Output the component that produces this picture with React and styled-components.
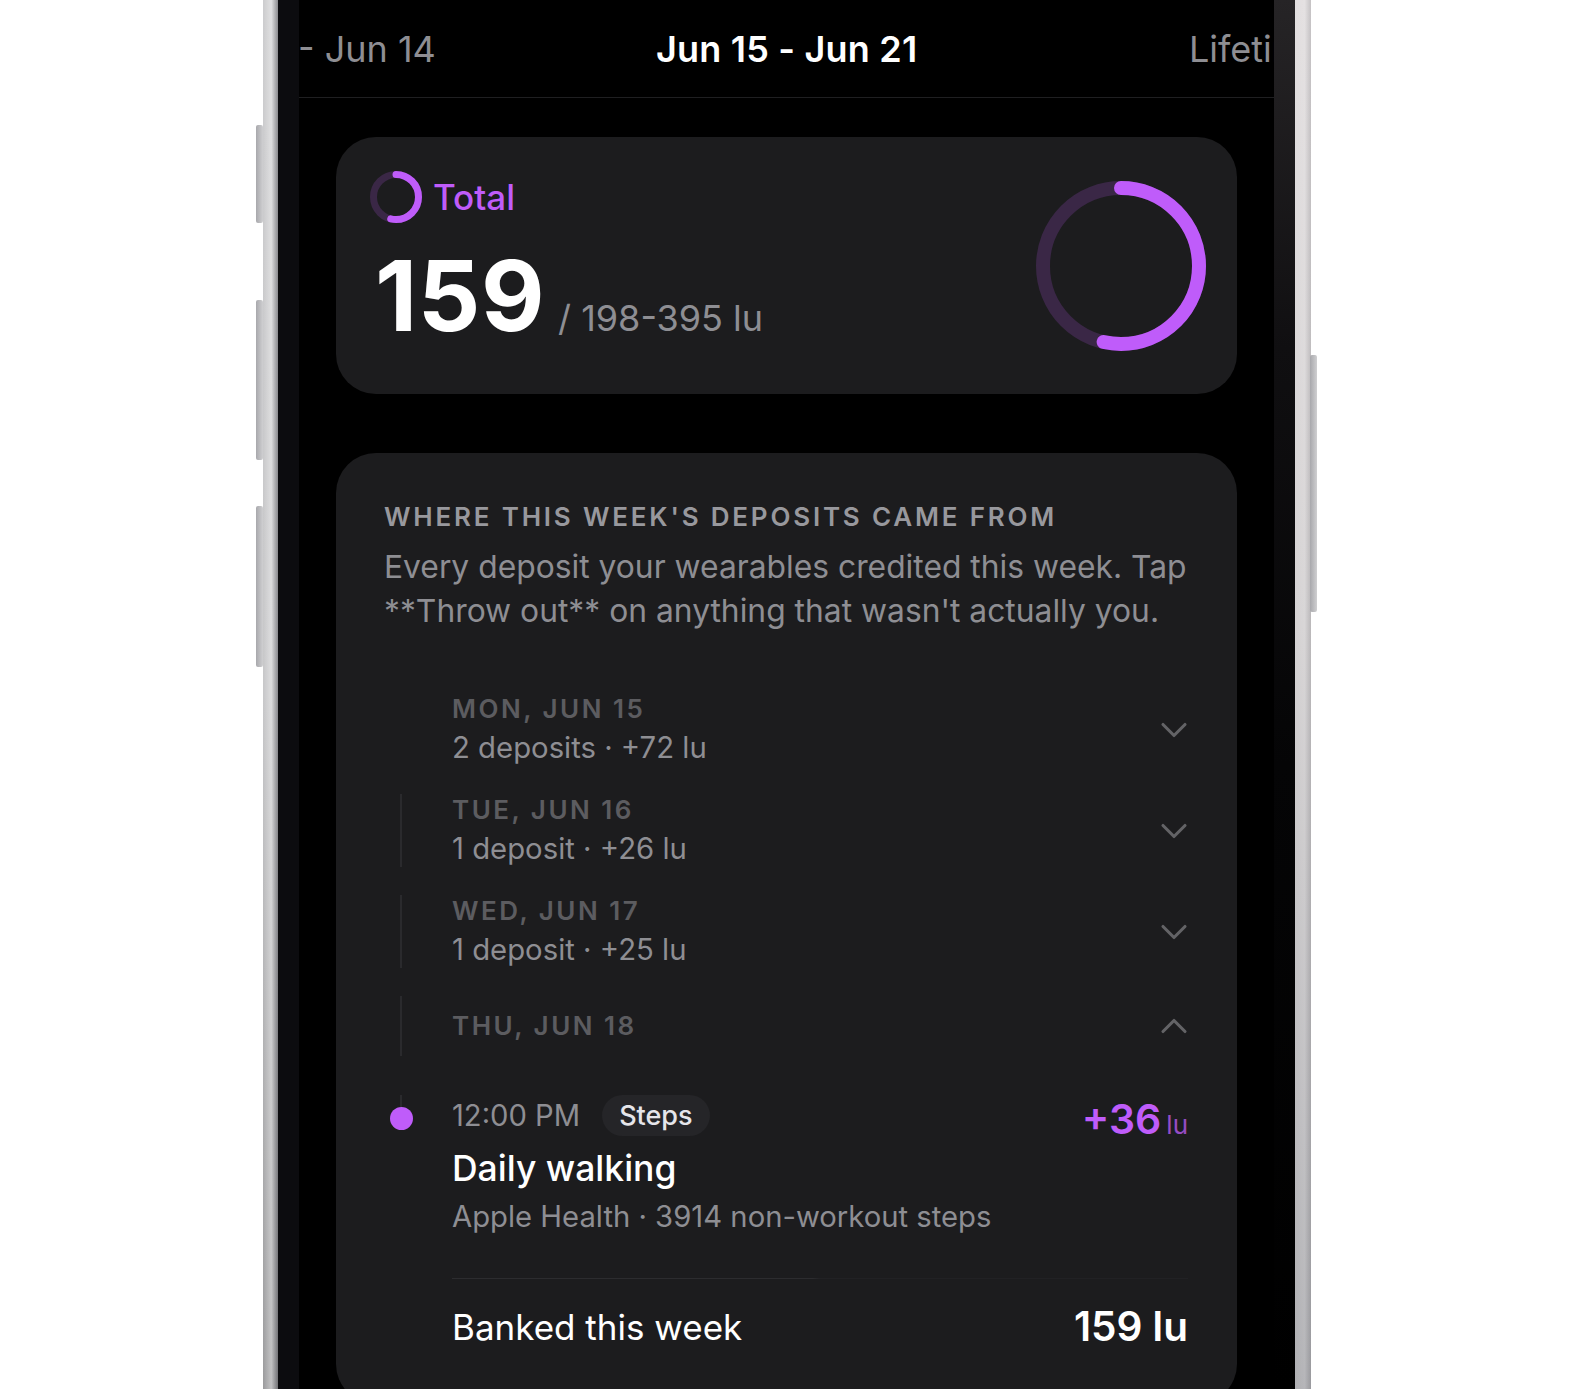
import styled, { createGlobalStyle } from "styled-components";
import { ChevronDown, ChevronUp } from "lucide-react";

const GlobalStyle = createGlobalStyle`
  html, body {
    margin: 0;
    padding: 0;
    background: #fff;
  }
  body {
    font-family: "Inter", "Liberation Sans", sans-serif;
  }
  #root {
    height: 1390px;
    overflow: hidden;
  }
`;

const PURPLE = "#bf5cfa";

const Page = styled.div`
  width: 1572px;
  height: 1389px;
  padding-left: 263px;
  box-sizing: border-box;
`;

const Phone = styled.div`
  position: relative;
  width: 1048px;
  height: 1389px;
  display: flex;
`;

const SideButton = styled.div`
  position: absolute;
  top: ${(p) => p.$top}px;
  height: ${(p) => p.$height}px;
  width: 7px;
  ${(p) => (p.$right ? "right: -6px;" : "left: -7px;")}
  background: linear-gradient(90deg, #a8a8ac, #cfcfd1);
  border-radius: 2px;
`;

const FrameLeft = styled.div`
  width: 15px;
  flex-shrink: 0;
  background:
    linear-gradient(90deg, rgba(255, 255, 255, 0.1), rgba(255, 255, 255, 0.45) 55%, rgba(90, 90, 95, 0.55)),
    linear-gradient(180deg, #c6c6c8 0%, #c0c0c2 50%, #8f8f91 100%);
`;

const FrameRight = styled.div`
  width: 16px;
  flex-shrink: 0;
  background:
    linear-gradient(90deg, rgba(255, 255, 255, 0.12), rgba(255, 255, 255, 0.2) 60%, rgba(120, 120, 125, 0.25)),
    linear-gradient(180deg, #dedadb 0%, #cfcccd 45%, #a4a4a8 100%);
`;

const BezelLeft = styled.div`
  width: 21px;
  flex-shrink: 0;
  background: #0c0c0f;
`;

const BezelRight = styled.div`
  width: 21px;
  flex-shrink: 0;
  background: linear-gradient(180deg, #262426 0%, #100f11 25%, #050506 55%, #000 100%);
`;

const Screen = styled.div`
  width: 975px;
  flex-shrink: 0;
  height: 1389px;
  overflow: hidden;
  background: #000;
`;

const Tabs = styled.div`
  display: grid;
  grid-template-columns: 358px 533px 200px;
  align-items: center;
  height: 97px;
  box-sizing: content-box;
  border-bottom: 1px solid #1f1f21;
  font-size: 36px;
  line-height: 99px;
  text-indent: -1px;
  white-space: nowrap;
  overflow: hidden;
`;

const Tab = styled.div`
  color: ${(p) => (p.$active ? "#fff" : "#8e8e93")};
  font-weight: ${(p) => (p.$active ? 600 : 400)};
  letter-spacing: ${(p) => (p.$active ? "0.2px" : "0")};
`;

const Content = styled.div`
  padding: 39px 37px 0;
  display: flex;
  flex-direction: column;
  gap: 59px;
`;

const Card = styled.div`
  background: #1c1c1e;
  border-radius: 40px;
`;

const TotalCard = styled(Card)`
  height: 257px;
  box-sizing: border-box;
  padding: 1px 31px 0 34px;
  display: flex;
  align-items: center;
  justify-content: space-between;
`;

const TotalText = styled.div`
  display: flex;
  flex-direction: column;
  padding-top: 13px;
`;

const TotalLabel = styled.div`
  display: flex;
  align-items: center;
  gap: 11px;
  color: ${PURPLE};
  font-size: 35px;
  font-weight: 500;
`;

const TotalValue = styled.div`
  display: flex;
  align-items: baseline;
  gap: 13px;
  margin-top: 17px;
  padding-left: 5px;
  line-height: 112px;
`;

const BigNumber = styled.span`
  color: #fff;
  font-size: 98px;
  font-weight: 700;
  letter-spacing: 0.5px;
`;

const Goal = styled.span`
  color: #8e8e93;
  font-size: 36px;
`;

const Ring = ({ size, stroke, value }) => {
  const r = (size - stroke) / 2;
  const c = 2 * Math.PI * r;
  return (
    <svg width={size} height={size} viewBox={`0 0 ${size} ${size}`} style={{ flexShrink: 0 }}>
      <circle cx={size / 2} cy={size / 2} r={r} fill="none" stroke="#3a2746" strokeWidth={stroke} />
      <circle
        cx={size / 2}
        cy={size / 2}
        r={r}
        fill="none"
        stroke={PURPLE}
        strokeWidth={stroke}
        strokeLinecap="round"
        strokeDasharray={`${c * value} ${c}`}
        transform={`rotate(-90 ${size / 2} ${size / 2})`}
      />
    </svg>
  );
};

const DepositsCard = styled(Card)`
  padding: 48px 49px 30px 48px;
`;

const Heading = styled.div`
  color: #98989d;
  font-size: 26px;
  line-height: 32px;
  font-weight: 600;
  letter-spacing: 2.8px;
`;

const Intro = styled.p`
  margin: 12px 0 0;
  color: #8e8e93;
  font-size: 31.8px;
  line-height: 44px;
`;

const Timeline = styled.div`
  margin-top: 60px;
`;

const Row = styled.div`
  display: flex;
  padding-bottom: ${(p) => p.$gap}px;
`;

const Rail = styled.div`
  width: 34px;
  flex-shrink: 0;
  margin-right: 34px;
  display: flex;
  flex-direction: column;
  align-items: center;
`;

const RailLine = styled.div`
  width: 2px;
  height: ${(p) => (p.$height ? `${p.$height}px` : "100%")};
  background: ${(p) => (p.$hidden ? "transparent" : "#2a2a2d")};
  flex-shrink: 0;
`;

const Dot = styled.div`
  width: 23px;
  height: 23px;
  border-radius: 50%;
  background: ${PURPLE};
  flex-shrink: 0;
`;

const DayBody = styled.div`
  flex: 1;
  height: ${(p) => p.$height}px;
  display: flex;
  align-items: center;
  justify-content: space-between;
`;

const DayDate = styled.div`
  color: #5c5c60;
  font-size: 26px;
  line-height: 32px;
  font-weight: 600;
  letter-spacing: 2.5px;
`;

const DaySummary = styled.div`
  margin-top: 5px;
  color: #8e8e93;
  font-size: 29.3px;
  line-height: 36px;
`;

const Chevron = styled.div`
  display: flex;
  color: #636366;
  margin-right: -8px;
`;

const Entry = styled.div`
  flex: 1;
  min-width: 0;
`;

const EntryTop = styled.div`
  display: flex;
  justify-content: space-between;
  height: 41px;
`;

const EntryMeta = styled.div`
  display: flex;
  align-items: center;
  gap: 22px;
  height: 41px;
`;

const Time = styled.span`
  color: #8e8e93;
  font-size: 29.2px;
`;

const Pill = styled.span`
  display: flex;
  align-items: center;
  height: 41px;
  padding: 0 17px;
  border-radius: 21px;
  background: #252528;
  color: #e5e5ea;
  font-size: 27px;
  font-weight: 500;
`;

const Amount = styled.div`
  display: flex;
  align-items: baseline;
  gap: 5px;
  height: 50px;
  margin-top: -1px;
  color: ${PURPLE};
  font-size: 41px;
  font-weight: 600;
  line-height: 50px;
  span {
    font-size: 26px;
    font-weight: 400;
    opacity: 0.75;
  }
`;

const EntryTitle = styled.div`
  margin-top: 9px;
  color: #fff;
  font-size: 35.5px;
  font-weight: 500;
  line-height: 48px;
`;

const EntrySource = styled.div`
  margin-top: 2px;
  color: #8e8e93;
  font-size: 29.25px;
  line-height: 44px;
`;

const Divider = styled.div`
  margin: 39px 0 0 68px;
  height: 1px;
  background: linear-gradient(90deg, #2c2c2f 0%, #2c2c2f 49%, #212124 50%, #212124 100%);
`;

const Footer = styled.div`
  margin-left: 68px;
  height: 95px;
  display: flex;
  align-items: center;
  justify-content: space-between;
  color: #fff;
  font-size: 35px;
`;

const FooterValue = styled.span`
  font-weight: 600;
  font-size: 40.5px;
`;

const days = [
  { date: "MON, JUN 15", summary: "2 deposits · +72 lu", line: false },
  { date: "TUE, JUN 16", summary: "1 deposit · +26 lu", line: true },
  { date: "WED, JUN 17", summary: "1 deposit · +25 lu", line: true },
];

export default function App() {
  return (
    <Page>
      <GlobalStyle />
      <Phone>
        <SideButton $top={125} $height={98} />
        <SideButton $top={300} $height={160} />
        <SideButton $top={506} $height={161} />
        <SideButton $right $top={355} $height={257} />
        <FrameLeft />
        <BezelLeft />
        <Screen>
          <Tabs>
            <Tab>- Jun 14</Tab>
            <Tab $active>Jun 15 - Jun 21</Tab>
            <Tab>Lifetime</Tab>
          </Tabs>
          <Content>
            <TotalCard>
              <TotalText>
                <TotalLabel>
                  <Ring size={52} stroke={7} value={0.535} />
                  Total
                </TotalLabel>
                <TotalValue>
                  <BigNumber>159</BigNumber>
                  <Goal>/ 198-395 lu</Goal>
                </TotalValue>
              </TotalText>
              <Ring size={170} stroke={14} value={0.535} />
            </TotalCard>
            <DepositsCard>
              <Heading>WHERE THIS WEEK'S DEPOSITS CAME FROM</Heading>
              <Intro>
                Every deposit your wearables credited this week. Tap **Throw out** on anything that wasn't actually you.
              </Intro>
              <Timeline>
                {days.map((d) => (
                  <Row key={d.date} $gap={28}>
                    <Rail>
                      <RailLine $hidden={!d.line} />
                    </Rail>
                    <DayBody $height={73}>
                      <div>
                        <DayDate>{d.date}</DayDate>
                        <DaySummary>{d.summary}</DaySummary>
                      </div>
                      <Chevron>
                        <ChevronDown size={44} strokeWidth={1.7} />
                      </Chevron>
                    </DayBody>
                  </Row>
                ))}
                <Row $gap={39}>
                  <Rail>
                    <RailLine />
                  </Rail>
                  <DayBody $height={60}>
                    <DayDate>THU, JUN 18</DayDate>
                    <Chevron>
                      <ChevronUp size={44} strokeWidth={1.7} />
                    </Chevron>
                  </DayBody>
                </Row>
                <Row $gap={0}>
                  <Rail>
                    <RailLine $height={12} />
                    <Dot />
                  </Rail>
                  <Entry>
                    <EntryTop>
                      <EntryMeta>
                        <Time>12:00 PM</Time>
                        <Pill>Steps</Pill>
                      </EntryMeta>
                      <Amount>
                        +36<span>lu</span>
                      </Amount>
                    </EntryTop>
                    <EntryTitle>Daily walking</EntryTitle>
                    <EntrySource>Apple Health · 3914 non-workout steps</EntrySource>
                  </Entry>
                </Row>
              </Timeline>
              <Divider />
              <Footer>
                <span>Banked this week</span>
                <FooterValue>159 lu</FooterValue>
              </Footer>
            </DepositsCard>
          </Content>
        </Screen>
        <BezelRight />
        <FrameRight />
      </Phone>
    </Page>
  );
}
